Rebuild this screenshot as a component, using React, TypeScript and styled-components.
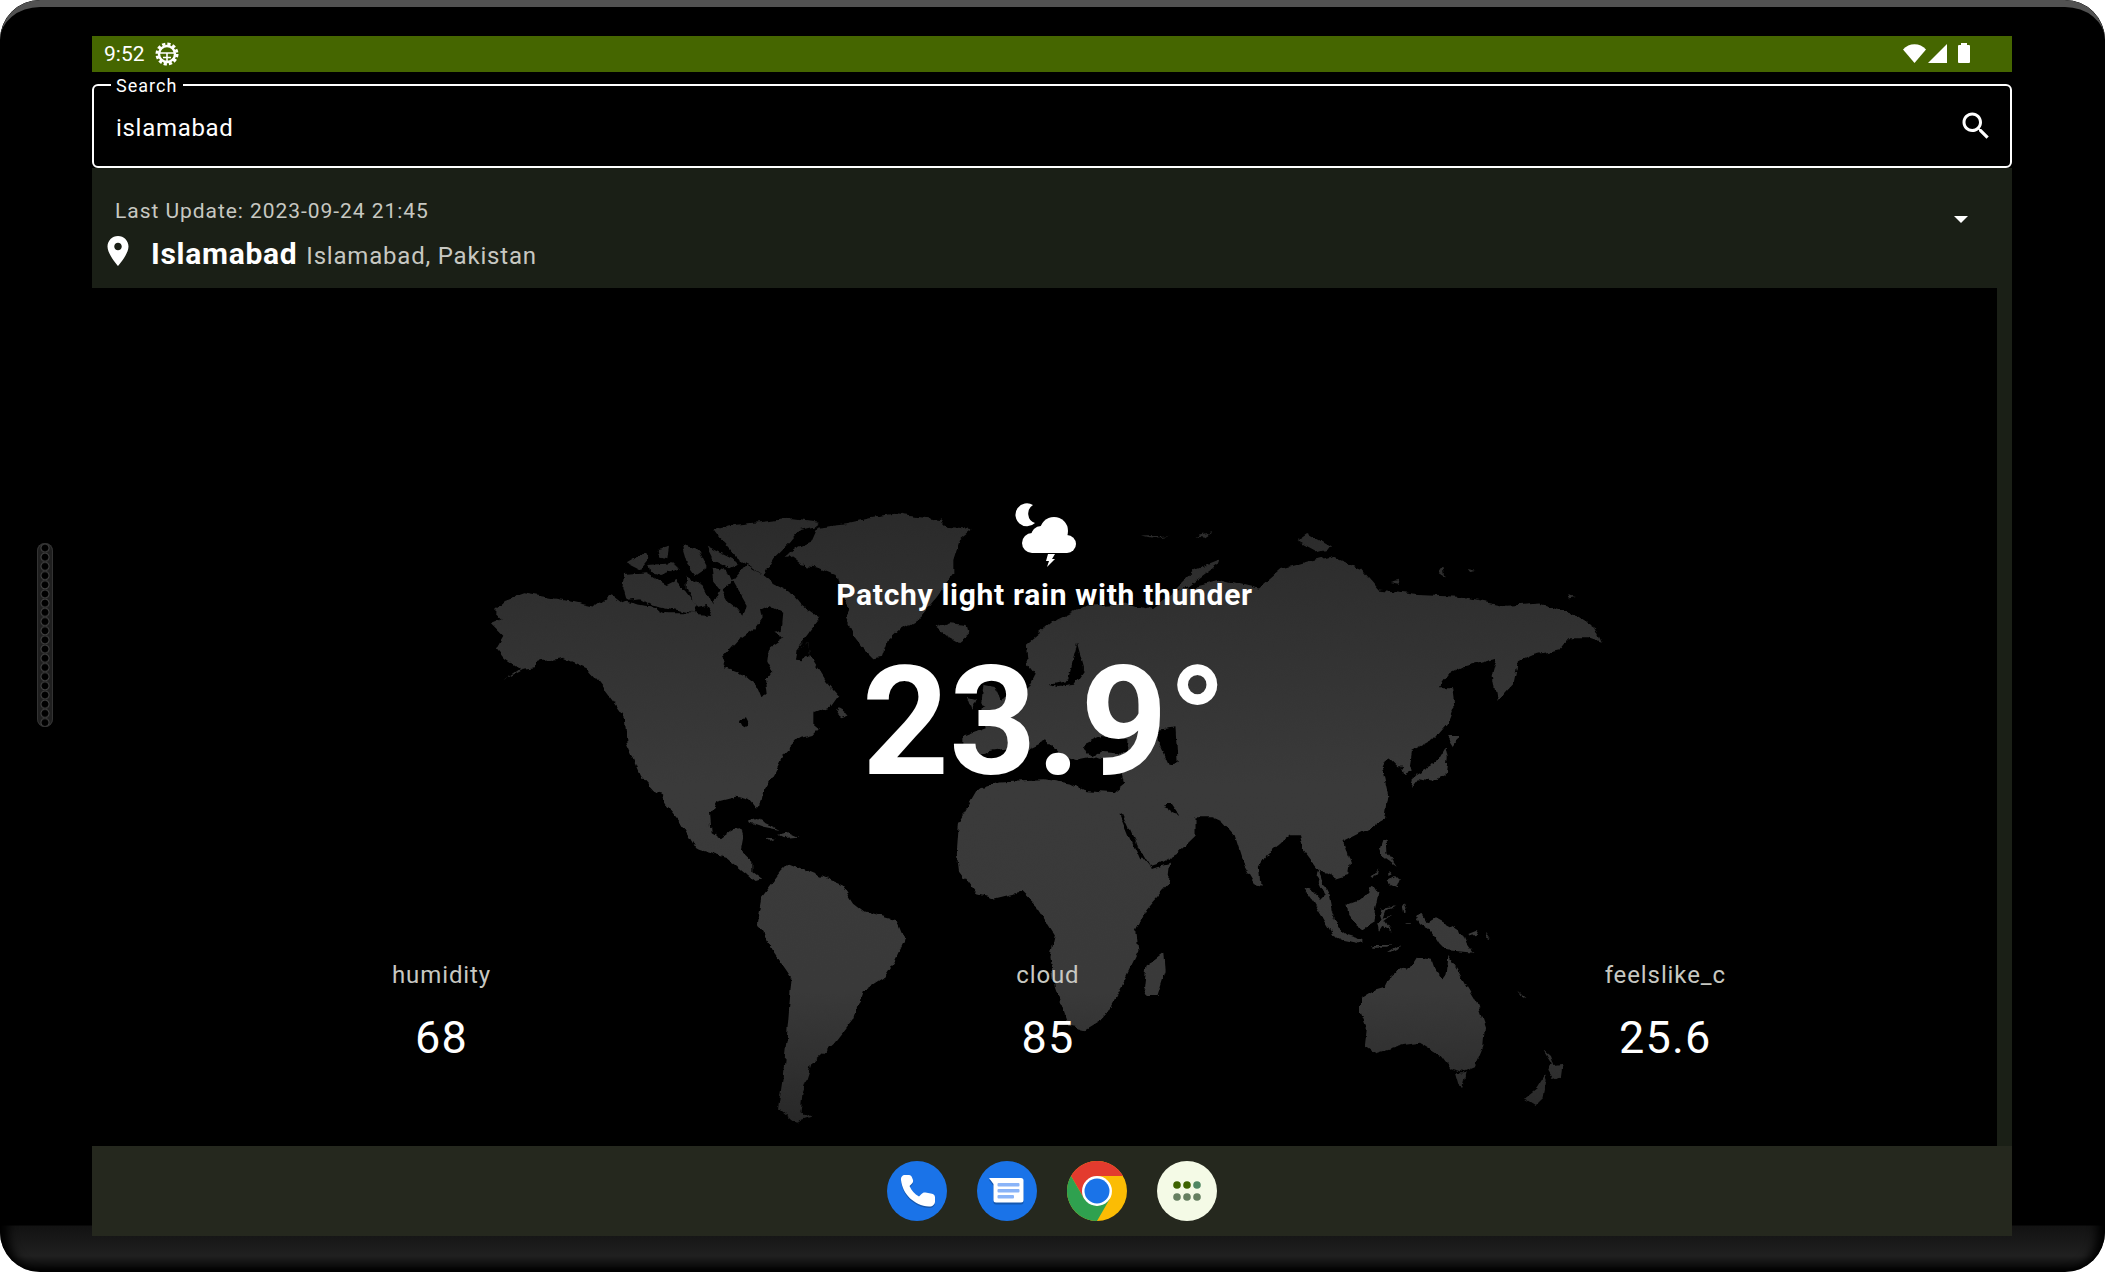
import React from "react";
import styled, { createGlobalStyle } from "styled-components";

const GlobalStyle = createGlobalStyle`
	html, body {
		margin: 0;
		padding: 0;
		background: #ffffff;
		font-family: Roboto, "Liberation Sans", sans-serif;
		color: #ffffff;
	}
`;

const Device = styled.div`
	position: relative;
	width: 2105px;
	height: 1272px;
	box-sizing: border-box;
	padding: 36px 93px 36px 92px;
	border-radius: 40px;
	overflow: hidden;
	background: linear-gradient(180deg, #000 0, #000 1225px, #121212 1226px, #202020 1256px, #000 1272px);
	box-shadow: inset 14px 0 10px -6px #000, inset -14px 0 10px -6px #000;

	&::before {
		content: "";
		position: absolute;
		inset: 0;
		box-sizing: border-box;
		border-radius: 40px;
		border-top: 7px solid #525252;
		pointer-events: none;
	}
`;

const SpeakerGrill = styled.div`
	position: absolute;
	left: 37px;
	top: 543px;
	width: 16px;
	height: 184px;
	border-radius: 8px;
	background: radial-gradient(circle at 8px 5px, #000 3px, #444 4px, #1f1f1f 5px) 0 0 / 16px 9.2px repeat-y;
	box-shadow: inset 0 0 0 1px #333;
`;

const Screen = styled.div`
	width: 1920px;
	height: 1200px;
	display: flex;
	flex-direction: column;
	background: #000;
`;

const StatusBar = styled.div`
	height: 36px;
	flex: none;
	display: flex;
	align-items: center;
	justify-content: space-between;
	padding: 0 42px 0 12px;
	background: #456600;
	font-size: 21px;
`;

const StatusGroup = styled.div`
	display: flex;
	align-items: center;
	gap: 10px;
`;

const SearchField = styled.div`
	position: relative;
	flex: none;
	height: 84px;
	margin-top: 12px;
	box-sizing: border-box;
	display: flex;
	align-items: center;
	justify-content: space-between;
	padding: 0 22px 0 22px;
	border: 2px solid #fff;
	border-radius: 6px;
`;

const SearchLabel = styled.span`
	position: absolute;
	left: 17px;
	top: -11px;
	padding: 0 6px 0 5px;
	background: #000;
	font-size: 18px;
	line-height: 21px;
	letter-spacing: 1px;
`;

const SearchValue = styled.span`
	font-size: 24px;
	letter-spacing: 0.7px;
	margin-top: 3px;
`;

const SearchIcon = styled.svg`
	width: 36px;
	height: 36px;
	margin-right: -6px;
	fill: #fff;
`;

const Header = styled.div`
	flex: none;
	height: 120px;
	box-sizing: border-box;
	position: relative;
	padding: 28px 0 0 23px;
	background: #1a1f16;
`;

const LastUpdate = styled.div`
	font-size: 21px;
	line-height: 30px;
	letter-spacing: 0.95px;
	color: #c7c8c2;
`;

const LocationRow = styled.div`
	display: flex;
	align-items: baseline;
	margin: 10px 0 0 -12px;
`;

const PinIcon = styled.svg`
	width: 36px;
	height: 36px;
	align-self: flex-start;
	margin: -3px 15px 0 -3px;
	fill: #fff;
`;

const CityName = styled.span`
	font-size: 30px;
	font-weight: 700;
	letter-spacing: 0.7px;
`;

const CityRegion = styled.span`
	margin-left: 9px;
	font-size: 24px;
	letter-spacing: 0.8px;
	color: #c7c8c2;
`;

const ExpandArrow = styled.span`
	position: absolute;
	right: 44px;
	top: 48px;
	width: 0;
	height: 0;
	border-left: 7px solid transparent;
	border-right: 7px solid transparent;
	border-top: 7px solid #fff;
`;

const Body = styled.div`
	flex: 1;
	min-height: 0;
	display: flex;
	background: #1a1f16;
`;

const Main = styled.div`
	position: relative;
	width: 1905px;
	display: flex;
	flex-direction: column;
	align-items: center;
	background: #000;
`;

const WorldMap = styled.svg`
	position: absolute;
	left: 0;
	top: 0;
`;

const Current = styled.div`
	position: relative;
	margin-top: 212px;
	width: 100%;
	display: flex;
	flex-direction: column;
	align-items: center;
`;

const WeatherIcon = styled.svg`
	width: 72px;
	height: 72px;
	margin-left: 3px;
`;

const Condition = styled.div`
	margin-top: 1px;
	font-size: 30px;
	font-weight: 700;
	line-height: 44px;
	letter-spacing: 0.7px;
`;

const Temperature = styled.div`
	margin-top: 17px;
	font-size: 152px;
	font-weight: 700;
	line-height: 176px;
`;

const Stats = styled.div`
	position: relative;
	margin-top: 151px;
	width: 100%;
	box-sizing: border-box;
	display: flex;
	justify-content: space-between;
	padding: 0 271px 0 300px;
`;

const Stat = styled.div`
	display: flex;
	flex-direction: column;
	align-items: center;
`;

const StatLabel = styled.div`
	font-size: 24px;
	line-height: 28px;
	letter-spacing: 0.9px;
	color: #c7c8c2;
`;

const StatValue = styled.div`
	margin-top: 22px;
	font-size: 45px;
	line-height: 53px;
	letter-spacing: 1.2px;
`;

const Dock = styled.div`
	flex: none;
	height: 90px;
	display: flex;
	align-items: center;
	justify-content: center;
	gap: 30px;
	background: #25281e;
`;

const DockIcon = styled.svg`
	width: 60px;
	height: 60px;
	display: block;
`;

// map shapes were traced from crops of the reference, each with its own origin and scale
const americas = "translate(480 505) scale(0.33333)";
const eurasia = "translate(950 480) scale(0.4464 0.4337)";
const oceania = "translate(1200 760) scale(0.33333)";
const southAmerica = "translate(450 480) scale(0.4464 0.4337)";

const landShapes: [string, string][] = [
	[americas, "M42 315L75 285L130 265L175 272L250 285L320 300L345 305L395 268L430 295L440 290L520 305L560 325L640 325L700 300L720 250L760 225L800 180L850 210L880 235L930 260L965 300L1020 340L985 385L950 430L985 415L990 450L1040 530L1075 570L1050 605L1000 625L1000 660L1020 668L1000 690L960 700L910 750L885 800L850 860L840 910L830 910L810 885L770 875L710 890L690 925L695 985L720 1000L760 970L780 966L787 992L780 1031L820 1070L820 1102L847 1122L827 1128L794 1102L740 1057L660 1031L640 1020L605 960L525 860L480 810L440 720L435 640L400 590L355 530L320 490L250 458L175 470L165 490L125 495L70 525L120 490L75 460L50 430L70 395L30 355L65 340Z"],
	[americas, "M435 210L500 205L560 240L590 225L620 265L650 300L640 325L520 300L440 285L430 250Z"],
	[americas, "M440 175L500 140L510 160L480 195Z"],
	[americas, "M530 135L570 125L565 160L535 155Z"],
	[americas, "M505 180L570 175L600 190L540 210L510 200Z"],
	[americas, "M605 120L650 130L680 190L650 210L620 170Z"],
	[americas, "M680 125L730 150L780 175L750 190L700 165Z"],
	[americas, "M695 185L740 195L760 240L720 255L700 230Z"],
	[americas, "M620 215L670 240L700 300L670 320L640 290L620 250Z"],
	[americas, "M700 75L760 60L850 50L940 40L1020 50L1000 65L960 75L930 110L880 160L850 210L800 175L770 155L735 115L715 95Z"],
	[americas, "M945 130L990 110L1010 65L1100 55L1170 40L1250 28L1380 45L1400 65L1475 72L1440 100L1420 165L1420 210L1370 280L1320 340L1260 375L1220 410L1205 455L1180 460L1150 430L1120 390L1095 340L1110 310L1080 250L1070 210L1020 190L960 180L920 150Z"],
	[americas, "M1370 370L1410 355L1460 360L1465 385L1430 412L1400 395Z"],
	[americas, "M1075 610L1110 630L1085 640L1070 630Z"],
	[americas, "M805 950L830 942L900 975L850 965Z"],
	[americas, "M890 990L925 982L955 995L910 1000Z"],
	[americas, "M860 998L885 1000L870 1004Z"],
	[southAmerica, "M690 1020L700 960L740 905L760 885L810 905L880 935L905 975L930 995L1000 1015L1018 1060L995 1110L970 1150L925 1180L905 1240L860 1300L810 1345L790 1410L785 1460L810 1470L775 1482L735 1450L745 1380L755 1280L765 1150L725 1090Z"],
	[eurasia, "M170 380L240 320L300 290L400 285L450 300L500 260L610 230L690 250L740 205L850 175L920 205L960 255L1050 265L1150 270L1250 290L1320 285L1400 310L1445 340L1460 375L1430 365L1385 365L1365 390L1300 405L1270 420L1260 470L1225 510L1215 450L1225 410L1150 430L1120 445L1095 480L1125 480L1130 520L1115 560L1080 600L1035 625L1030 660L1005 660L985 640L974 646L967 661L982 730L974 784L933 807L881 834L896 884L892 911L866 919L825 896L791 849L784 819L762 819L709 865L694 892L698 934L683 930L657 884L638 822L612 792L586 780L550 780L550 820L510 860L450 895L430 860L385 770L360 725L390 700L380 660L330 640L280 650L250 640L215 600L175 620L130 620L70 630L30 625L30 590L80 570L70 530L130 500L175 480L190 450L175 430Z"],
	[eurasia, "M15 860L20 790L65 710L110 695L210 690L270 700L300 715L370 720L390 760L400 790L430 870L450 895L495 885L490 930L440 990L415 1040L420 1090L385 1165L345 1240L300 1268L265 1260L235 1170L225 1100L235 1050L195 985L160 950L100 965L60 955L20 900Z"],
	[eurasia, "M435 1170L440 1120L480 1090L483 1130L465 1190L445 1190Z"],
	[eurasia, "M1035 710L1040 680L1090 650L1110 615L1115 640L1110 680L1080 695L1050 690Z"],
	[eurasia, "M1110 590L1140 590L1125 615Z"],
	[eurasia, "M505 250L550 205L605 183L600 195L560 225L520 255Z"],
	[eurasia, "M430 130L490 128L450 135Z"],
	[eurasia, "M550 130L590 120L570 133Z"],
	[eurasia, "M775 140L800 122L855 155L820 165Z"],
	[eurasia, "M1095 215L1105 200L1110 225Z"],
	[eurasia, "M1160 205L1180 210L1165 212Z"],
	[eurasia, "M985 235L1005 230L1008 240Z"],
	[eurasia, "M1380 268L1400 272L1385 275Z"],
	[eurasia, "M75 470L100 475L115 510L95 530L70 520Z"],
	[eurasia, "M40 500L60 505L50 530Z"],
	[oceania, "M595 0L625 0L635 35L610 45Z"],
	[oceania, "M312 385L330 385L360 420L375 405L350 350L355 322L365 360L385 400L395 450L415 505L440 525L490 540L490 552L430 540L400 525L370 475L340 425Z"],
	[oceania, "M548 240L560 235L562 280L590 320L575 310L550 290L540 265Z"],
	[oceania, "M560 360L585 345L600 360L590 385L570 375Z"],
	[oceania, "M565 330L575 340L565 345Z"],
	[oceania, "M515 350L535 325L530 340L520 358Z"],
	[oceania, "M440 435L480 420L520 375L535 400L525 450L520 490L490 508L465 490L445 465Z"],
	[oceania, "M540 460L545 445L590 435L555 450L548 470L570 465L550 480L575 515L550 500L540 515L535 490L545 475Z"],
	[oceania, "M608 440L615 430L620 455L612 460Z"],
	[oceania, "M510 555L570 555L565 560L515 560Z"],
	[oceania, "M565 580L605 555L590 572L570 582Z"],
	[oceania, "M615 490L640 490L625 495Z"],
	[oceania, "M645 465L665 462L680 490L705 475L760 505L790 525L800 550L820 578L760 572L735 570L715 550L690 510L660 490Z"],
	[oceania, "M805 522L835 510L830 525L810 527Z"],
	[oceania, "M858 515L872 535L862 530Z"],
	[oceania, "M952 692L980 718L965 712Z"],
	[oceania, "M480 715L520 690L555 680L570 650L610 620L625 630L650 590L695 600L705 630L725 660L740 640L745 585L770 625L800 680L830 730L855 800L850 860L825 920L790 935L750 925L720 885L660 848L610 855L530 880L495 855L500 810L480 760Z"],
	[oceania, "M765 940L800 940L790 980L775 975Z"],
	[oceania, "M1030 868L1050 885L1060 915L1085 912L1080 950L1060 960L1045 935L1055 910Z"],
	[oceania, "M972 1015L1010 985L1035 945L1040 960L1030 1010L1005 1035Z"],
];

const seaShapes: [string, string][] = [
	[americas, "M725 460L770 410L820 375L845 340L840 315L870 300L910 320L905 375L880 380L915 400L870 430L865 470L880 495L855 525L860 570L845 578L830 540L790 510L735 490Z"],
	[americas, "M725 255L760 230L800 300L790 335L770 310L745 290Z"],
	[americas, "M640 310L680 300L700 330L650 328Z"],
	[americas, "M440 285L480 280L522 305L470 298Z"],
	[americas, "M778 645L795 640L805 660L790 668Z"],
	[americas, "M945 470L950 430L985 415L990 450L965 472Z"],
	[americas, "M525 865L545 870L568 945L545 920Z"],
	[eurasia, "M225 470L265 460L285 375L300 430L300 440L280 470L240 475Z"],
	[eurasia, "M300 610L340 590L400 600L395 630L340 625L315 640Z"],
	[eurasia, "M470 575L505 570L510 650L490 655L470 610Z"],
	[eurasia, "M480 745L495 745L515 775L495 770Z"],
	[eurasia, "M388 770L410 820L432 870L424 872L402 822L382 772Z"],
	[eurasia, "M450 890L495 875L495 882L452 897Z"],
];

function MapLayer() {
	return (
		<WorldMap width="1905" height="858" viewBox="92 288 1905 858">
			<defs>
				<linearGradient id="land" gradientUnits="userSpaceOnUse" x1="0" y1="505" x2="0" y2="1130">
					<stop offset="0" stopColor="#2a2a2a" />
					<stop offset="0.45" stopColor="#3a3a3a" />
					<stop offset="0.78" stopColor="#393939" />
					<stop offset="1" stopColor="#272727" />
				</linearGradient>
				<clipPath id="continents">
					{landShapes.map(([t, d]) => (
						<path key={d} d={d} transform={t} />
					))}
				</clipPath>
				{/* breaks up the straight runs of the traced coastlines */}
				<filter id="coast" filterUnits="userSpaceOnUse" x="92" y="288" width="1905" height="858" colorInterpolationFilters="sRGB">
					<feTurbulence type="fractalNoise" baseFrequency="0.09" numOctaves="3" seed="4" result="noise" />
					<feDisplacementMap in="SourceGraphic" in2="noise" scale="7" xChannelSelector="R" yChannelSelector="G" />
				</filter>
			</defs>
			<g filter="url(#coast)">
				<rect x="92" y="288" width="1905" height="858" fill="url(#land)" clipPath="url(#continents)" />
				{seaShapes.map(([t, d]) => (
					<path key={d} d={d} transform={t} fill="#000" />
				))}
			</g>
		</WorldMap>
	);
}

function GearGlyph() {
	return (
		<svg width="24" height="24" viewBox="0 0 24 24" fill="none" stroke="#fff">
			<circle cx="12" cy="12" r="8" strokeWidth="2.4" />
			<circle cx="12" cy="12" r="10" strokeWidth="3" strokeDasharray="3.2 2.04" />
			<path d="M4 11h16M12 11v8M8 15.5h8" strokeWidth="1.6" />
		</svg>
	);
}

function StatusIcons() {
	return (
		<svg width="68" height="24" viewBox="0 0 68 24" fill="#fff">
			<path d="M1 7.5C7 .5 18 .5 24 7.5L12.5 21Z" />
			<path d="M26 21L45 2V21Z" />
			<path d="M56 4a1 1 0 0 1 1-1h2V1h6v2h2a1 1 0 0 1 1 1v16a1 1 0 0 1-1 1H57a1 1 0 0 1-1-1Z" />
		</svg>
	);
}

const handset =
	"M18 14C15.5 14 13.7 16 14 19C15.5 33 27 44.5 42 45.5C45.5 45.7 48 43.5 48 40.5V36.5C48 34.5 46.8 33.3 45 32.8L38.5 31.5C36.8 31.2 35.5 31.8 34.5 33L32 35.5C27.5 33 24.5 29.5 22.5 25L25 22.5C26 21.5 26.3 20.3 26 19L25 16.5C24.5 15 23.5 14 22 14Z";

const bubble = "M12 17h32a2.5 2.5 0 0 1 2.5 2.5V39a2.5 2.5 0 0 1-2.5 2.5H19a2.5 2.5 0 0 1-2.5-2.5V23Z";

function PhoneApp() {
	return (
		<DockIcon viewBox="0 0 60 60">
			<circle cx="30" cy="30" r="30" fill="#1a73e8" />
			<path d={handset} fill="#1558b0" transform="translate(0 1.5)" />
			<path d={handset} fill="#fff" />
		</DockIcon>
	);
}

function MessagesApp() {
	return (
		<DockIcon viewBox="0 0 60 60">
			<circle cx="30" cy="30" r="30" fill="#1a73e8" />
			<path d={bubble} fill="#1558b0" transform="translate(0 2)" />
			<path d={bubble} fill="#fff" />
			<rect x="20.5" y="22" width="22" height="3.5" rx="1" fill="#8ab4f8" />
			<rect x="20.5" y="28" width="22" height="3.5" rx="1" fill="#8ab4f8" />
			<rect x="20.5" y="34" width="16.5" height="3.5" rx="1" fill="#8ab4f8" />
		</DockIcon>
	);
}

function ChromeApp() {
	return (
		<DockIcon viewBox="0 0 60 60">
			<circle cx="30" cy="30" r="30" fill="#fbbc04" />
			<path d="M30 0A30 30 0 0 1 56 15H30L17 37.5L4 15A30 30 0 0 1 30 0Z" fill="#e33b2e" />
			<path d="M4 15L17 37.5L30 45L43 37.5L30 60A30 30 0 0 1 4 15Z" fill="#2fa14f" />
			<circle cx="30" cy="30" r="15" fill="#fff" />
			<circle cx="30" cy="30" r="12.5" fill="#1a73e8" />
		</DockIcon>
	);
}

function AppsDrawer() {
	const dots = [
		[20, 24, "#3d6300"],
		[30, 24, "#3d6300"],
		[40, 24, "#4f8763"],
		[20, 36, "#657f60"],
		[30, 36, "#657f60"],
		[40, 36, "#657f60"],
	] as const;
	return (
		<DockIcon viewBox="0 0 60 60">
			<circle cx="30" cy="30" r="30" fill="#f4fae6" />
			{dots.map(([x, y, c]) => (
				<circle key={`${x}-${y}`} cx={x} cy={y} r="3.8" fill={c} />
			))}
		</DockIcon>
	);
}

export default function App() {
	return (
		<>
			<GlobalStyle />
			<Device>
				<SpeakerGrill />
				<Screen>
					<StatusBar>
						<StatusGroup>
							<span>9:52</span>
							<GearGlyph />
						</StatusGroup>
						<StatusIcons />
					</StatusBar>
					<SearchField>
						<SearchLabel>Search</SearchLabel>
						<SearchValue>islamabad</SearchValue>
						<SearchIcon viewBox="0 0 24 24">
							<path d="M15.5 14h-.79l-.28-.27C15.41 12.59 16 11.11 16 9.5 16 5.91 13.09 3 9.5 3S3 5.91 3 9.5 5.91 16 9.5 16c1.61 0 3.09-.59 4.23-1.57l.27.28v.79l5 4.99L20.49 19l-4.99-5zm-6 0C7.01 14 5 11.99 5 9.5S7.01 5 9.5 5 14 7.01 14 9.5 11.99 14 9.5 14z" />
						</SearchIcon>
					</SearchField>
					<Header>
						<LastUpdate>Last Update: 2023-09-24 21:45</LastUpdate>
						<LocationRow>
							<PinIcon viewBox="0 0 24 24">
								<path d="M12 2C8.13 2 5 5.13 5 9c0 5.25 7 13 7 13s7-7.75 7-13c0-3.87-3.13-7-7-7zm0 9.5c-1.38 0-2.5-1.12-2.5-2.5s1.12-2.5 2.5-2.5 2.5 1.12 2.5 2.5-1.12 2.5-2.5 2.5z" />
							</PinIcon>
							<CityName>Islamabad</CityName>
							<CityRegion>Islamabad, Pakistan</CityRegion>
						</LocationRow>
						<ExpandArrow />
					</Header>
					<Body>
						<Main>
							<MapLayer />
							<Current>
								<WeatherIcon viewBox="0 0 72 72" fill="#fff">
									<path d="M23 5A11.5 11.5 0 1 0 25 23A10 10 0 0 1 23 5Z" />
									<circle cx="22" cy="43" r="10" />
									<circle cx="31" cy="36" r="10" />
									<circle cx="44" cy="31" r="14" />
									<circle cx="57" cy="44" r="9" />
									<rect x="22" y="40" width="35" height="13" />
									<path d="M41 54h4l-3 5h3l-8 8 2-6h-3l2-7Z" />
								</WeatherIcon>
								<Condition>Patchy light rain with thunder</Condition>
								<Temperature>23.9°</Temperature>
							</Current>
							<Stats>
								<Stat>
									<StatLabel>humidity</StatLabel>
									<StatValue>68</StatValue>
								</Stat>
								<Stat>
									<StatLabel>cloud</StatLabel>
									<StatValue>85</StatValue>
								</Stat>
								<Stat>
									<StatLabel>feelslike_c</StatLabel>
									<StatValue>25.6</StatValue>
								</Stat>
							</Stats>
						</Main>
					</Body>
					<Dock>
						<PhoneApp />
						<MessagesApp />
						<ChromeApp />
						<AppsDrawer />
					</Dock>
				</Screen>
			</Device>
		</>
	);
}
